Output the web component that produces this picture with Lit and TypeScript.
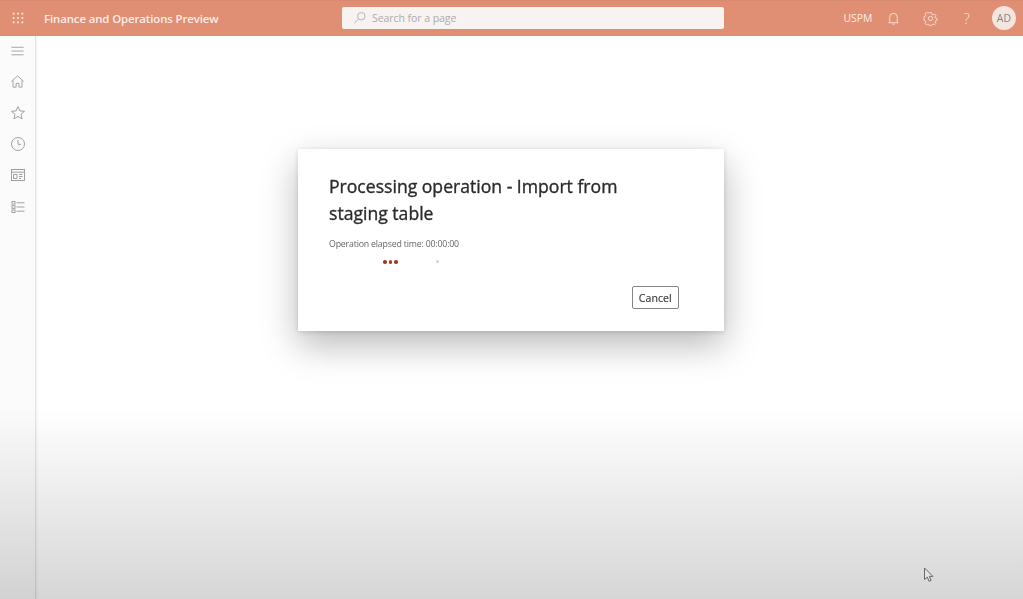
import { LitElement, html, css, svg } from "lit";
import { customElement } from "lit/decorators.js";

const icon = (body: unknown, size = 16, vb = 16) => html`<svg class="ico" width=${size} height=${size} viewBox="0 0 ${vb} ${vb}" fill="none" stroke="currentColor" stroke-width="1">${body}</svg>`;

const dots = [3, 8, 13].flatMap((y) => [3, 8, 13].map((x) => svg`<rect x=${x - 1} y=${y - 1} width="2" height="2" fill="currentColor" stroke="none"/>`));

@customElement("app-root")
export class AppRoot extends LitElement {
  static styles = css`
    :host {
      display: block;
      width: 1023px;
      height: 599px;
      font-family: "Open Sans", "Noto Sans", sans-serif;
      overflow: hidden;
    }
    .page {
      position: relative;
      height: 599px;
      display: flex;
      flex-direction: column;
      background: #fff;
      filter: blur(0.35px);
    }
    .top {
      height: 36px;
      flex: none;
      background: #e08f74;
      color: #fbeee8;
      display: flex;
      align-items: center;
      border-top: 1px solid #d88a70;
      padding-bottom: 1px;
      box-sizing: border-box;
    }
    .waffle { width: 35px; display: flex; justify-content: center; }
    .brand { margin-left: 9px; width: 298px; font-size: 11.4px; font-weight: 600; white-space: nowrap; letter-spacing: -0.1px; }
    .search {
      width: 382px;
      height: 22px;
      background: #f6f3f1;
      border-radius: 2px;
      display: flex;
      align-items: center;
      gap: 5px;
      padding-left: 11px;
      box-sizing: border-box;
      color: #b0aba8;
      font-size: 10.6px;
      letter-spacing: -0.1px;
    }
    .right { margin-left: auto; display: flex; align-items: center; padding-right: 7px; }
    .uspm { font-size: 10.4px; margin-right: 0; width: 32px; }
    .tool { width: 36.5px; display: flex; justify-content: center; color: #f7e2d9; }
    .q { font-size: 15px; font-weight: 300; line-height: 16px; }
    .avatar {
      width: 24px;
      height: 24px;
      border-radius: 50%;
      background: #f4e6df;
      color: #8c7f79;
      font-size: 10.5px;
      display: flex;
      align-items: center;
      justify-content: center;
      margin-left: 7px;
    }
    .main { flex: 1; display: flex; min-height: 0; }
    .rail {
      width: 35px;
      flex: none;
      background: #fbfbfb;
      border-right: 1px solid #e2e2e2;
      box-shadow: 1px 0 2px rgba(0, 0, 0, 0.06);
      display: flex;
      flex-direction: column;
      align-items: center;
      padding-top: 8px;
      box-sizing: content-box;
      color: #a0a0a0;
      gap: 15.35px;
    }
    .content { flex: 1; display: flex; flex-direction: column; align-items: stretch; padding: 113px 0 0 262px; }
    .modal {
      width: 426px;
      height: 182px;
      box-sizing: border-box;
      background: #fff;
      padding: 24px 45px 0 31px;
      box-shadow: 0 14px 34px rgba(0, 0, 0, 0.28), 0 1px 5px rgba(0, 0, 0, 0.14);
      display: flex;
      flex-direction: column;
      position: relative;
      z-index: 2;
    }
    h1 {
      margin: 0;
      font-size: 17.6px;
      line-height: 27px;
      font-weight: 500;
      -webkit-text-stroke: 0.35px #2b2b2b;
      color: #2b2b2b;
      width: 330px;
    }
    .elapsed { margin-top: 10px; font-size: 8.8px; line-height: 14px; color: #666; letter-spacing: -0.19px; }
    .progress { position: relative; height: 4px; margin-top: 9px; }
    .dot { position: absolute; top: 0; width: 3.5px; height: 3.5px; border-radius: 50%; background: #a33a24; }
    .dot.grey { width: 3px; height: 3px; background: #d4d4d4; }
    .actions { display: flex; justify-content: flex-end; margin-top: 22px; }
    button {
      width: 47.5px;
      height: 23px;
      padding: 0;
      font: 500 10.6px "Open Sans", sans-serif;
      -webkit-text-stroke: 0.15px #3a3a3a;
      color: #3a3a3a;
      background: #fff;
      border: 1px solid #858585;
      border-radius: 2px;
    }
    .fade {
      position: absolute;
      left: 0;
      right: 0;
      bottom: 0;
      height: 190px;
      background: linear-gradient(to bottom, #fff, #d6d6d6);
      mix-blend-mode: multiply;
      pointer-events: none;
      z-index: 3;
    }
    .cursor { position: absolute; left: 923px; top: 567px; z-index: 4; }
  `;

  render() {
    return html`<div class="page">
      <header class="top">
        <div class="waffle">${icon(dots, 14)}</div>
        <div class="brand">Finance and Operations Preview</div>
        <div class="search">
          ${icon(svg`<circle cx="9.5" cy="6" r="4.3"/><path d="M6.4 9.2 1.5 14"/>`, 14)}
          <span>Search for a page</span>
        </div>
        <div class="right">
          <span class="uspm">USPM</span>
          <span class="tool">${icon(svg`<path d="M4 11.5V6.5a4 4 0 0 1 8 0v5l1 1H3zM6.8 14h2.4"/>`, 15)}</span>
          <span class="tool">${icon(svg`<circle cx="8" cy="8" r="2.3"/><path d="M6.8 1.5h2.4l.4 1.9 1.4.6 1.7-1 1.6 1.7-1 1.6.6 1.5 1.8.4v2.3l-1.8.4-.6 1.5 1 1.6-1.6 1.7-1.7-1-1.4.6-.4 1.4H6.8l-.4-1.4-1.4-.6-1.7 1-1.6-1.7 1-1.6-.6-1.5-1.6-.4V6.2l1.6-.4.6-1.5-1-1.6L3.3 1l1.7 1 1.4-.6z" transform="translate(0.6 0.4) scale(.92)"/>`, 15)}</span>
          <span class="tool q">?</span>
          <span class="avatar">AD</span>
        </div>
      </header>
      <div class="main">
        <nav class="rail">
          ${icon(svg`<path d="M1.5 3.5h13M1.5 7.5h13M1.5 11.5h13"/>`, 15)}
          ${icon(svg`<path d="M1.5 7.8 8 2l6.5 5.8M3.2 6.6V14h3.3v-4h3v4h3.3V6.6"/>`, 15)}
          ${icon(svg`<path d="m8 1.6 1.9 4.3 4.6.4-3.5 3 1.1 4.6L8 11.5l-4.1 2.4L5 9.3l-3.5-3 4.6-.4z"/>`, 16)}
          ${icon(svg`<circle cx="8" cy="8" r="6.5"/><path d="M8 4v4.3h3"/>`, 16)}
          ${icon(svg`<rect x="1.5" y="2.5" width="13" height="11"/><path d="M1.5 5.2h13"/><path d="M3.5 7.5h3.5v4H3.5zM9 7.5h3.5M9 9.5h3.5M9 11.5h2" />`, 16)}
          ${icon(svg`<rect x="2" y="2.5" width="3" height="2.6"/><rect x="2" y="6.7" width="3" height="2.6"/><rect x="2" y="10.9" width="3" height="2.6"/><path d="M6.5 3.8h8M6.5 8h8M6.5 12.2h8"/>`, 16)}
        </nav>
        <main class="content">
          <section class="modal">
            <h1>Processing operation - Import from staging table</h1>
            <div class="elapsed">Operation elapsed time: 00:00:00</div>
            <div class="progress">
              <i class="dot" style="left:54px"></i>
              <i class="dot" style="left:59.5px"></i>
              <i class="dot" style="left:65px"></i>
              <i class="dot grey" style="left:107px"></i>
            </div>
            <div class="actions"><button>Cancel</button></div>
          </section>
        </main>
      </div>
      <div class="fade"></div>
      <svg class="cursor" width="13" height="16" viewBox="0 0 13 16" fill="#e4e4e4" stroke="#666" stroke-width="1"><path d="M1.5 1v11.5l2.8-2.4 1.8 4.2 2-.9-1.8-4h3.6z"/></svg>
    </div>`;
  }
}
